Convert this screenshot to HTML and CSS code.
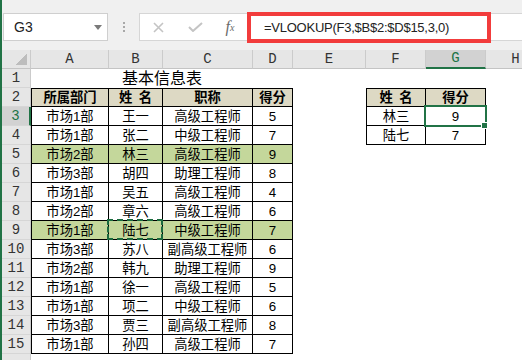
FILE: index.html
```html
<!DOCTYPE html>
<html>
<head>
  <meta charset="utf-8">
  <title>VLOOKUP</title>
  <link rel="stylesheet" href="styles.css">
</head>
<body>
  <div class="app">
    <div class="toolbar">
      <div class="namebox">
        <span class="ref">G3</span>
        <span class="arrow"></span>
      </div>
      <div class="grip"><span class="dots"></span></div>
      <div class="btns">
        <span class="slot">
          <svg width="11" height="11" viewBox="0 0 11 11"><path d="M1 1 L10 10 M10 1 L1 10" stroke="#c4c4c4" stroke-width="1.6" fill="none"/></svg>
        </span>
        <span class="slot">
          <svg width="15" height="10" viewBox="0 0 15 10"><path d="M1 5 L5 9 L14 1" stroke="#c4c4c4" stroke-width="2" fill="none"/></svg>
        </span>
        <span class="slot fx"><i>f</i><sub>x</sub></span>
      </div>
      <div class="fbar">
        <div class="mark">=VLOOKUP(F3,$B$2:$D$15,3,0)</div>
      </div>
    </div>

    <table class="sheet">
      <colgroup>
        <col style="width:29px">
        <col style="width:78px">
        <col style="width:54px">
        <col style="width:90px">
        <col style="width:40px">
        <col style="width:73px">
        <col style="width:60px">
        <col style="width:60px">
        <col style="width:60px">
      </colgroup>
      <tr>
        <th class="ch corner"></th>
        <th class="ch">A</th>
        <th class="ch">B</th>
        <th class="ch">C</th>
        <th class="ch">D</th>
        <th class="ch">E</th>
        <th class="ch">F</th>
        <th class="ch on">G</th>
        <th class="ch">H</th>
      </tr>
      <tr>
        <td class="rh">1</td>
        <td colspan="4" class="title">基本信息表</td>
        <td></td><td></td><td></td><td></td>
      </tr>
      <tr>
        <td class="rh">2</td>
        <td class="t tl tt hd">所属部门</td>
        <td class="t tt hd">姓&ensp;名</td>
        <td class="t tt hd">职称</td>
        <td class="t tt hd">得分</td>
        <td></td>
        <td class="t tl tt hd">姓&ensp;名</td>
        <td class="t tt hd">得分</td>
        <td></td>
      </tr>
      <tr>
        <td class="rh on">3</td>
        <td class="t tl">市场1部</td><td class="t">王一</td><td class="t">高级工程师</td><td class="t">5</td>
        <td></td>
        <td class="t tl">林三</td>
        <td class="t cur">9</td>
        <td></td>
      </tr>
      <tr>
        <td class="rh">4</td>
        <td class="t tl">市场1部</td><td class="t">张二</td><td class="t">中级工程师</td><td class="t">7</td>
        <td></td>
        <td class="t tl">陆七</td>
        <td class="t">7</td>
        <td></td>
      </tr>
      <tr>
        <td class="rh">5</td>
        <td class="t tl g">市场2部</td><td class="t g">林三</td><td class="t g">高级工程师</td><td class="t g">9</td>
        <td></td><td></td><td></td><td></td>
      </tr>
      <tr>
        <td class="rh">6</td>
        <td class="t tl">市场3部</td><td class="t">胡四</td><td class="t">助理工程师</td><td class="t">8</td>
        <td></td><td></td><td></td><td></td>
      </tr>
      <tr>
        <td class="rh">7</td>
        <td class="t tl">市场1部</td><td class="t">吴五</td><td class="t">高级工程师</td><td class="t">4</td>
        <td></td><td></td><td></td><td></td>
      </tr>
      <tr>
        <td class="rh">8</td>
        <td class="t tl">市场2部</td><td class="t">章六</td><td class="t">高级工程师</td><td class="t">6</td>
        <td></td><td></td><td></td><td></td>
      </tr>
      <tr>
        <td class="rh">9</td>
        <td class="t tl g">市场1部</td><td class="t g copy">陆七</td><td class="t g">中级工程师</td><td class="t g">7</td>
        <td></td><td></td><td></td><td></td>
      </tr>
      <tr>
        <td class="rh">10</td>
        <td class="t tl">市场3部</td><td class="t">苏八</td><td class="t">副高级工程师</td><td class="t">6</td>
        <td></td><td></td><td></td><td></td>
      </tr>
      <tr>
        <td class="rh">11</td>
        <td class="t tl">市场2部</td><td class="t">韩九</td><td class="t">助理工程师</td><td class="t">9</td>
        <td></td><td></td><td></td><td></td>
      </tr>
      <tr>
        <td class="rh">12</td>
        <td class="t tl">市场1部</td><td class="t">徐一</td><td class="t">高级工程师</td><td class="t">5</td>
        <td></td><td></td><td></td><td></td>
      </tr>
      <tr>
        <td class="rh">13</td>
        <td class="t tl">市场1部</td><td class="t">项二</td><td class="t">中级工程师</td><td class="t">6</td>
        <td></td><td></td><td></td><td></td>
      </tr>
      <tr>
        <td class="rh">14</td>
        <td class="t tl">市场3部</td><td class="t">贾三</td><td class="t">副高级工程师</td><td class="t">8</td>
        <td></td><td></td><td></td><td></td>
      </tr>
      <tr>
        <td class="rh">15</td>
        <td class="t tl">市场1部</td><td class="t">孙四</td><td class="t">高级工程师</td><td class="t">7</td>
        <td></td><td></td><td></td><td></td>
      </tr>
      <tr>
        <td class="rh"></td>
        <td></td><td></td><td></td><td></td><td></td><td></td><td></td><td></td>
      </tr>
    </table>
  </div>
</body>
</html>
```
FILE: styles.css
```css
body {
  margin: 0;
  width: 522px;
  height: 360px;
  overflow: hidden;
  background-color: #fff;
  font-family: "Liberation Sans", "Noto Sans CJK SC", sans-serif;
  color: #000;
}
.app {
  height: 360px;
  border-left: 2px solid #217346;
}

/* barra de fórmulas */
.toolbar {
  height: 50px;
  box-sizing: border-box;
  padding-top: 13px;
  background-color: #f0f0f0;
  display: flex;
  align-items: flex-start;
}
.namebox {
  margin-left: 1px;
  width: 105px;
  height: 28px;
  box-sizing: border-box;
  padding-left: 10px;
  padding-right: 5px;
  background-color: #fff;
  border: 1px solid #cfcfcf;
  display: flex;
  align-items: center;
  font-size: 14px;
  color: #222;
}
.arrow {
  margin-left: auto;
  width: 0;
  height: 0;
  border-left: 4px solid transparent;
  border-right: 4px solid transparent;
  border-top: 5px solid #7a7a7a;
}
.grip {
  width: 31px;
  height: 28px;
  display: flex;
  justify-content: center;
  align-items: center;
}
.dots {
  width: 2px;
  height: 2px;
  margin-top: -8px;
  background-color: #a8a8a8;
  box-shadow: 0 4px 0 #a8a8a8, 0 8px 0 #a8a8a8;
}
.btns {
  width: 108px;
  height: 28px;
  box-sizing: border-box;
  background-color: #fff;
  border: 1px solid #d6d6d6;
  border-right: none;
  display: flex;
  align-items: center;
}
.slot {
  width: 37px;
  display: flex;
  justify-content: center;
  align-items: center;
}
.fx {
  width: 32px;
  font-family: "Liberation Serif", serif;
  font-size: 16px;
  color: #6a6a6a;
}
.fx sub {
  font-size: 10px;
  font-style: italic;
  vertical-align: -2px;
}
.fbar {
  flex: 1;
  height: 28px;
  box-sizing: border-box;
  background-color: #fff;
  border: 1px solid #d6d6d6;
  border-right: none;
}
.mark {
  width: 244px;
  height: 31px;
  box-sizing: border-box;
  margin-top: -2px;
  margin-left: -1px;
  padding-left: 13px;
  border: 4px solid #f23c3c;
  display: flex;
  align-items: center;
  font-size: 13px;
  letter-spacing: -0.25px;
  color: #222;
}

/* planilha */
.sheet {
  border-collapse: separate;
  border-spacing: 0;
  table-layout: fixed;
  width: 544px;
}
.sheet tr {
  height: 19px;
}
.sheet td, .sheet th {
  padding: 0;
  text-align: center;
  white-space: nowrap;
  font-size: 13.3px;
  line-height: 17px;
}
.ch {
  height: 19px;
  box-sizing: border-box;
  background-color: #e6e6e6;
  border-right: 1px solid #cbcbcb;
  border-bottom: 1px solid #c4c4c4;
  font-family: "Liberation Mono", monospace;
  font-weight: normal;
  font-size: 14px !important;
  color: #333;
}
.ch.on {
  background-color: #d2d2d2;
  border-bottom: 2px solid #217346;
  color: #217346;
}
.corner {
  background-image: linear-gradient(135deg, transparent 50%, #bdbdbd 50%);
  background-size: 11px 11px;
  background-position: right 3px bottom 3px;
  background-repeat: no-repeat;
}
.rh {
  background-color: #e6e6e6;
  border-right: 1px solid #cbcbcb;
  border-bottom: 1px solid #d6d6d6;
  font-family: "Liberation Mono", monospace;
  font-size: 14px !important;
  color: #333;
}
.rh.on {
  background-color: #d2d2d2;
  border-right: 2px solid #217346;
  color: #217346;
}
.title {
  vertical-align: bottom;
  font-size: 16px !important;
  line-height: 18px !important;
}
.t {
  border-right: 1px solid #000;
  border-bottom: 1px solid #000;
}
.tl {
  border-left: 1px solid #000;
}
.tt {
  border-top: 1px solid #000;
}
.hd {
  background-color: #ddd9c4;
  font-weight: bold;
}
.g {
  background-color: #c4d79b;
}

/* célula ativa e área copiada */
.cur, .copy {
  position: relative;
}
.cur::after {
  content: "";
  position: absolute;
  left: -2px;
  top: -2px;
  right: -2px;
  bottom: -2px;
  border: 2px solid #217346;
}
.cur::before {
  content: "";
  position: absolute;
  right: -3px;
  bottom: -4px;
  width: 5px;
  height: 5px;
  background-color: #217346;
  border: 1px solid #fff;
  z-index: 1;
}
.copy::after {
  content: "";
  position: absolute;
  left: -2px;
  top: -2px;
  right: -1px;
  bottom: -1px;
  border: 2px dashed #1b6a3e;
}
```
